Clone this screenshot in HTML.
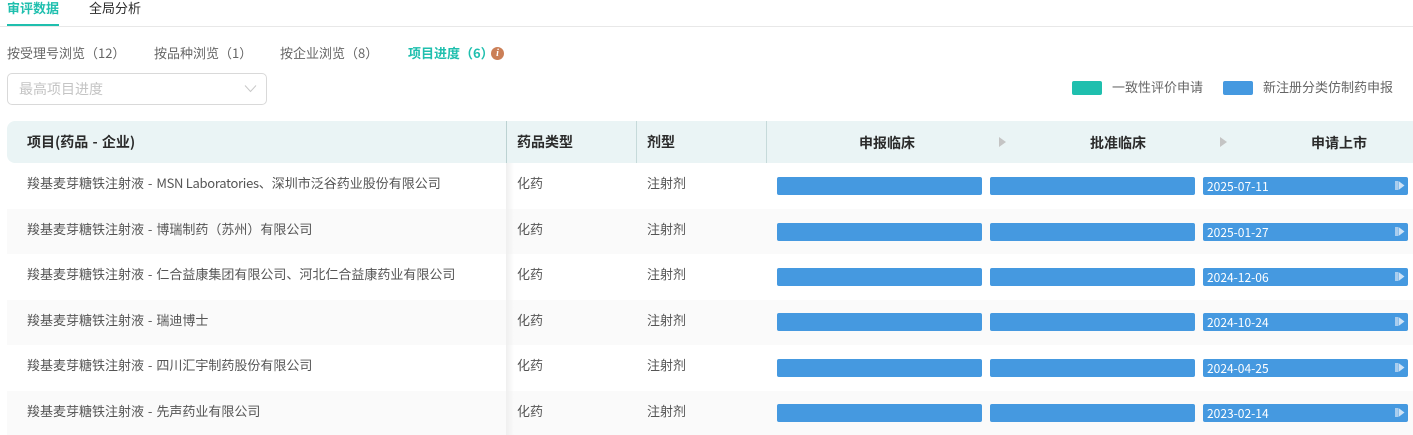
<!DOCTYPE html>
<html lang="zh"><head><meta charset="utf-8"><style>
html,body{margin:0;padding:0;background:#fff}
#p{position:relative;width:1413px;height:435px;overflow:hidden;background:#fff;font-family:"Noto Sans CJK SC","Liberation Sans",sans-serif;font-size:13px;color:#555}
#p div{position:absolute;white-space:nowrap}
.t{line-height:20px;height:20px}
.n{word-spacing:1px}
.l{letter-spacing:-.3px;word-spacing:0}
.h{font-weight:700;font-size:14px;color:#2b2b2b;line-height:20px;height:20px}
.b{background:#4599e0;border-radius:2px;height:18px}
.d{color:#fff;line-height:19px;font-size:12px;padding-left:4px;box-sizing:border-box}
.r{left:7px;width:1406px;height:45.5px}
.s{background:#fafafa}
svg{position:absolute}
</style></head><body><div id="p">
<div class="t" style="left:7px;top:-2px;font-weight:700;color:#1fbfae">审评数据</div>
<div class="t" style="left:89px;top:-2px;color:#2b2b2b">全局分析</div>
<div style="left:7px;top:24px;width:52px;height:2px;background:#1fbfae;z-index:2"></div>
<div style="left:0;top:26px;width:1413px;height:1px;background:#e8e8e8"></div>

<div class="t" style="left:7px;top:43px;color:#666">按受理号浏览（12）</div>
<div class="t" style="left:154px;top:43px;color:#666">按品种浏览（1）</div>
<div class="t" style="left:280px;top:43px;color:#666">按企业浏览（8）</div>
<div class="t" style="left:408px;top:43px;color:#1fbfae;font-weight:700">项目进度（6）</div>
<div style="left:491px;top:47px;width:13px;height:13px;border-radius:50%;background:#cb7f57;color:#fff;font:italic 700 10px/13px 'Liberation Serif',serif;text-align:center">i</div>

<div style="left:7px;top:73px;width:258px;height:30px;border:1px solid #d9d9d9;border-radius:5px"></div>
<div style="left:19px;top:79px;font-size:14px;line-height:20px;color:#c4c4c4">最高项目进度</div>
<svg style="left:244px;top:84px" width="13" height="9" viewBox="0 0 13 9"><path d="M1 1.500L6.500 7.500L12 1.500" fill="none" stroke="#c8c8c8" stroke-width="1"/></svg>

<div style="left:1072px;top:81px;width:30px;height:14px;border-radius:2px;background:#1fbfae"></div>
<div class="t" style="left:1112px;top:77px;color:#666">一致性评价申请</div>
<div style="left:1223px;top:81px;width:30px;height:14px;border-radius:2px;background:#4599e0"></div>
<div class="t" style="left:1263px;top:77px;color:#666">新注册分类仿制药申报</div>

<div style="left:7px;top:121px;width:1406px;height:42px;background:#eaf4f5;border-radius:8px 0 0 8px"></div>
<div style="left:506px;top:121px;width:1px;height:42px;background:#bcd2d2"></div>
<div style="left:636px;top:121px;width:1px;height:42px;background:#c6dada"></div>
<div style="left:766px;top:121px;width:1px;height:42px;background:#c6dada"></div>
<div class="h n" style="left:27px;top:132px">项目(药品 - 企业)</div>
<div class="h" style="left:517px;top:132px">药品类型</div>
<div class="h" style="left:647px;top:132px">剂型</div>
<div class="h" style="left:860px;top:133px;margin-left:-1px">申报临床</div>
<div class="h" style="left:1091px;top:133px;margin-left:-1px">批准临床</div>
<div class="h" style="left:1312px;top:133px;margin-left:-1px">申请上市</div>
<svg style="left:998px;top:136px" width="9" height="12"><path d="M1 1L8 6L1 11Z" fill="#c4c4c4"/></svg>
<svg style="left:1219px;top:136px" width="9" height="12"><path d="M1 1L8 6L1 11Z" fill="#c4c4c4"/></svg>

<div class="r s" style="top:208.500px"></div>
<div class="r s" style="top:299.500px"></div>
<div class="r s" style="top:390.500px"></div>
<div style="left:506px;top:163px;width:8px;height:272px;background:linear-gradient(90deg,#efefef,rgba(255,255,255,0))"></div>

<div class="t n" style="left:27px;top:173px">羧基麦芽糖铁注射液 - <span class="l">MSN Laboratories</span>、深圳市泛谷药业股份有限公司</div>
<div class="t" style="left:517px;top:173px">化药</div><div class="t" style="left:647px;top:173px">注射剂</div>
<div class="b" style="left:777px;top:177px;width:205px"></div><div class="b" style="left:990px;top:177px;width:205px"></div>
<div class="b d" style="left:1203px;top:177px;width:205px">2025-07-11</div>
<svg style="left:1395px;top:180px" width="11" height="11"><rect x="0" y="1" width="3" height="9" fill="#a9cdee"/><path d="M3.500 1L9.500 5.500L3.500 10Z" fill="#cfe3f6"/></svg>

<div class="t n" style="left:27px;top:219px">羧基麦芽糖铁注射液 - 博瑞制药（苏州）有限公司</div>
<div class="t" style="left:517px;top:219px">化药</div><div class="t" style="left:647px;top:219px">注射剂</div>
<div class="b" style="left:777px;top:223px;width:205px"></div><div class="b" style="left:990px;top:223px;width:205px"></div>
<div class="b d" style="left:1203px;top:223px;width:205px">2025-01-27</div>
<svg style="left:1395px;top:226px" width="11" height="11"><rect x="0" y="1" width="3" height="9" fill="#a9cdee"/><path d="M3.500 1L9.500 5.500L3.500 10Z" fill="#cfe3f6"/></svg>

<div class="t n" style="left:27px;top:264px">羧基麦芽糖铁注射液 - 仁合益康集团有限公司、河北仁合益康药业有限公司</div>
<div class="t" style="left:517px;top:264px">化药</div><div class="t" style="left:647px;top:264px">注射剂</div>
<div class="b" style="left:777px;top:268px;width:205px"></div><div class="b" style="left:990px;top:268px;width:205px"></div>
<div class="b d" style="left:1203px;top:268px;width:205px">2024-12-06</div>
<svg style="left:1395px;top:271px" width="11" height="11"><rect x="0" y="1" width="3" height="9" fill="#a9cdee"/><path d="M3.500 1L9.500 5.500L3.500 10Z" fill="#cfe3f6"/></svg>

<div class="t n" style="left:27px;top:310px">羧基麦芽糖铁注射液 - 瑞迪博士</div>
<div class="t" style="left:517px;top:310px">化药</div><div class="t" style="left:647px;top:310px">注射剂</div>
<div class="b" style="left:777px;top:313px;width:205px"></div><div class="b" style="left:990px;top:313px;width:205px"></div>
<div class="b d" style="left:1203px;top:313px;width:205px">2024-10-24</div>
<svg style="left:1395px;top:316px" width="11" height="11"><rect x="0" y="1" width="3" height="9" fill="#a9cdee"/><path d="M3.500 1L9.500 5.500L3.500 10Z" fill="#cfe3f6"/></svg>

<div class="t n" style="left:27px;top:355px">羧基麦芽糖铁注射液 - 四川汇宇制药股份有限公司</div>
<div class="t" style="left:517px;top:355px">化药</div><div class="t" style="left:647px;top:355px">注射剂</div>
<div class="b" style="left:777px;top:359px;width:205px"></div><div class="b" style="left:990px;top:359px;width:205px"></div>
<div class="b d" style="left:1203px;top:359px;width:205px">2024-04-25</div>
<svg style="left:1395px;top:362px" width="11" height="11"><rect x="0" y="1" width="3" height="9" fill="#a9cdee"/><path d="M3.500 1L9.500 5.500L3.500 10Z" fill="#cfe3f6"/></svg>

<div class="t n" style="left:27px;top:401px">羧基麦芽糖铁注射液 - 先声药业有限公司</div>
<div class="t" style="left:517px;top:401px">化药</div><div class="t" style="left:647px;top:401px">注射剂</div>
<div class="b" style="left:777px;top:404px;width:205px"></div><div class="b" style="left:990px;top:404px;width:205px"></div>
<div class="b d" style="left:1203px;top:404px;width:205px">2023-02-14</div>
<svg style="left:1395px;top:407px" width="11" height="11"><rect x="0" y="1" width="3" height="9" fill="#a9cdee"/><path d="M3.500 1L9.500 5.500L3.500 10Z" fill="#cfe3f6"/></svg>
</div></body></html>
